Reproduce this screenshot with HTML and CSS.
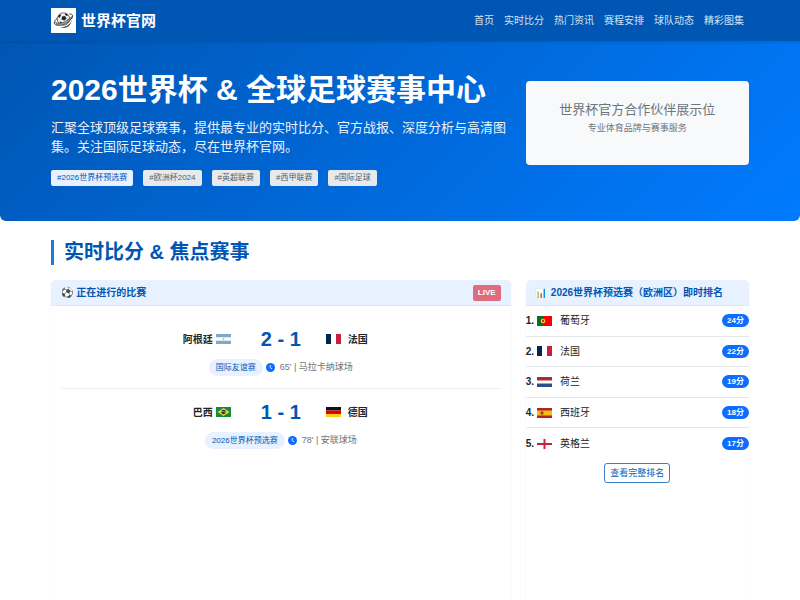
FILE: index.html
```html
<!DOCTYPE html>
<html lang="zh-CN">
<head>
<meta charset="utf-8">
<meta name="viewport" content="width=device-width, initial-scale=1">
<title>世界杯官网</title>
<link rel="stylesheet" href="styles.css">
</head>
<body>
<svg class="defs" aria-hidden="true">
  <symbol id="clock" viewBox="0 0 20 20"><circle cx="10" cy="10" r="10" fill="#0d6efd"/><path d="M9.5 4.5v6l4 2.5" fill="none" stroke="#fff" stroke-width="1.8"/></symbol>
  <symbol id="fr" viewBox="0 0 30 20"><path fill="#fff" d="M0 0h30v20H0z"/><path fill="#00264d" d="M0 0h10v20H0z"/><path fill="#c8203c" d="M20 0h10v20H20z"/></symbol>
</svg>
<header class="navbar">
  <div class="container navbar-inner">
    <a class="brand" href="#">
      <svg class="logo" viewBox="0 0 50 50" aria-hidden="true">
        <path fill="#fff" d="M0 0h50v50H0z"/>
        <circle cx="25" cy="22" r="12.5" fill="#eee" stroke="#444" stroke-width="1.5"/>
        <path d="M22 17l6-1 3 5-4 4-6-2zM14 17l4-5 2 3-3 5zM29 10l5 4-2 2-4-2zM32 24l4-3v6l-3 2zM18 27l4 2-1 4-4-3z" fill="#222"/>
        <path d="M12 21C5 26 5 33 11 34c10 2 26-6 31-14 3-6 0-8-5-8" fill="none" stroke="#333" stroke-width="2"/>
        <path d="M9 28c5 6 20 1 33-11-4 13-21 21-31 16z" fill="#999" stroke="#333"/>
        <path d="M17 37c11 4 22-4 25-14-2 13-13 21-25 14z" fill="#333"/>
      </svg>
      <span>世界杯官网</span>
    </a>
    <nav class="menu">
      <a href="#">首页</a><a href="#">实时比分</a><a href="#">热门资讯</a><a href="#">赛程安排</a><a href="#">球队动态</a><a href="#">精彩图集</a>
    </nav>
  </div>
</header>
<section class="hero">
  <div class="container columns">
    <div>
      <h1>2026世界杯 &amp; 全球足球赛事中心</h1>
      <p class="lead">汇聚全球顶级足球赛事，提供最专业的实时比分、官方战报、深度分析与高清图集。关注国际足球动态，尽在世界杯官网。</p>
      <div class="tags">
        <a class="tag tag-primary" href="#">#2026世界杯预选赛</a><a class="tag" href="#">#欧洲杯2024</a><a class="tag" href="#">#英超联赛</a><a class="tag" href="#">#西甲联赛</a><a class="tag" href="#">#国际足球</a>
      </div>
    </div>
    <aside class="partner">
      <p class="partner-title">世界杯官方合作伙伴展示位</p>
      <p class="partner-note">专业体育品牌与赛事服务</p>
    </aside>
  </div>
</section>
<main class="container main">
  <h2>实时比分 &amp; 焦点赛事</h2>
  <div class="columns grow">
    <section class="card">
      <div class="card-head"><h3><span class="emoji">⚽</span> 正在进行的比赛</h3><span class="live">LIVE</span></div>
      <div class="matches">
        <article class="match">
          <div class="teams">
            <div class="team home"><span>阿根廷</span>
              <svg class="flag" viewBox="0 0 30 20" aria-hidden="true"><path fill="#fff" d="M0 0h30v20H0z"/><path fill="#7ba9cc" d="M0 0h30v6.5H0zM0 13.500h30V20H0z"/><circle cx="15" cy="10" r="1.800" fill="#d8b45a"/></svg>
            </div>
            <strong class="score">2 - 1</strong>
            <div class="team"><svg class="flag" aria-hidden="true"><use href="#fr"/></svg><span>法国</span></div>
          </div>
          <div class="meta"><span class="pill">国际友谊赛</span><svg class="clock" aria-hidden="true"><use href="#clock"/></svg><span>65' | 马拉卡纳球场</span></div>
        </article>
        <article class="match">
          <div class="teams">
            <div class="team home"><span>巴西</span>
              <svg class="flag" viewBox="0 0 30 20" aria-hidden="true"><path fill="#168a3c" d="M0 0h30v20H0z"/><path fill="#f0d327" d="M15 2l12 8-12 8L3 10z"/><circle cx="15" cy="10" r="4.500" fill="#23335f"/><path d="M11 8.500q5 0 8 3" fill="none" stroke="#fff"/></svg>
            </div>
            <strong class="score">1 - 1</strong>
            <div class="team"><svg class="flag" viewBox="0 0 30 20" aria-hidden="true"><path fill="#111" d="M0 0h30v7H0z"/><path fill="#d00" d="M0 7h30v7H0z"/><path fill="#ffcc1a" d="M0 14h30v6H0z"/></svg><span>德国</span></div>
          </div>
          <div class="meta"><span class="pill">2026世界杯预选赛</span><svg class="clock" aria-hidden="true"><use href="#clock"/></svg><span>78' | 安联球场</span></div>
        </article>
      </div>
    </section>
    <section class="card">
      <div class="card-head"><h3><span class="emoji">📊</span> 2026世界杯预选赛（欧洲区）即时排名</h3></div>
      <ul class="ranking">
        <li><b>1.</b><svg class="flag" viewBox="0 0 30 20" aria-hidden="true"><path fill="#f00" d="M0 0h30v20H0z"/><path fill="#126b1c" d="M0 0h12v20H0z"/><circle cx="12" cy="10" r="4.500" fill="#f4dd36"/><path fill="#e22" d="M10 7.500h4v3l-2 2-2-2z"/></svg><span>葡萄牙</span><span class="points">24分</span></li>
        <li><b>2.</b><svg class="flag" aria-hidden="true"><use href="#fr"/></svg><span>法国</span><span class="points">22分</span></li>
        <li><b>3.</b><svg class="flag" viewBox="0 0 30 20" aria-hidden="true"><path fill="#fff" d="M0 0h30v20H0z"/><path fill="#a92b36" d="M0 0h30v7H0z"/><path fill="#2b4f8e" d="M0 13h30v7H0z"/></svg><span>荷兰</span><span class="points">19分</span></li>
        <li><b>4.</b><svg class="flag" viewBox="0 0 30 20" aria-hidden="true"><path fill="#b5202b" d="M0 0h30v20H0z"/><path fill="#f8bd12" d="M0 5h30v10H0z"/><path fill="#a8452b" d="M7 7h6v5l-3 2-3-2z"/></svg><span>西班牙</span><span class="points">18分</span></li>
        <li><b>5.</b><svg class="flag" viewBox="0 0 30 20" aria-hidden="true"><path fill="#fff" d="M0 0h30v20H0z"/><path fill="#cc1f3d" d="M13 0h4v20h-4zM0 8h30v4H0z"/></svg><span>英格兰</span><span class="points">17分</span></li>
      </ul>
      <button class="more" type="button">查看完整排名</button>
    </section>
  </div>
</main>
</body>
</html>
```

FILE: styles.css
```css
* { box-sizing: border-box; }
body {
  margin: 0;
  min-height: 100vh;
  display: flex;
  flex-direction: column;
  background: #fff;
  color: #212529;
  font: 10px/15px "Liberation Sans", "Noto Sans CJK SC", sans-serif;
}
h1, h2, h3, p, ul { margin: 0; padding: 0; }
a { color: inherit; text-decoration: none; }
.defs { display: none; }
.container { width: 100%; padding: 0 51px; }
.columns {
  display: grid;
  grid-template-columns: minmax(0, 1fr) 32%;
  column-gap: 15px;
}

.navbar {
  position: relative;
  background: #0056b3;
  color: #fff;
  box-shadow: 0 1px 3px rgba(0, 0, 0, .15);
}
.navbar-inner {
  display: flex;
  align-items: center;
  justify-content: space-between;
  min-height: 41px;
}
.brand { display: flex; align-items: center; gap: 5px; font-size: 15px; font-weight: bold; }
.logo { width: 25px; height: 25px; }
.menu { display: flex; gap: 10px; padding-right: 5px; color: #d3e2f2; }

.hero {
  padding: 30px 0 35px;
  border-radius: 0 0 6px 6px;
  background: linear-gradient(135deg, #0056b3, #007bff);
  color: #fff;
}
h1 { margin-bottom: 9px; font-size: 30px; line-height: 38px; white-space: nowrap; }
.lead { font-size: 13px; line-height: 19px; color: #e9f2fc; }
.tags { display: flex; flex-wrap: wrap; gap: 10px; margin-top: 14px; }
.tag {
  padding: 0 6px;
  border-radius: 2px;
  background: #e6eaef;
  color: #565e66;
  font-size: 8px;
  line-height: 16px;
}
.tag-primary { background: #e7f1ff; color: #0056b3; }
.partner {
  align-self: start;
  min-height: 84px;
  margin-top: 10px;
  padding: 20px 10px;
  border-radius: 4px;
  background: #f8f9fa;
  color: #6c757d;
  text-align: center;
}
.partner-title { font-size: 13px; line-height: 18px; }
.partner-note { margin-top: 3px; font-size: 9px; line-height: 12px; }

.main { flex: 1; display: flex; flex-direction: column; padding-top: 19px; }
h2 {
  margin-bottom: 15px;
  padding-left: 10px;
  border-left: 3px solid #1a7bd8;
  color: #0056b3;
  font-size: 20px;
  line-height: 25px;
}
.grow { flex: 1; }
.card { border-radius: 5px 5px 0 0; box-shadow: 0 1px 3px rgba(0, 0, 0, .05); }
.card-head {
  display: flex;
  align-items: center;
  justify-content: space-between;
  min-height: 26px;
  padding: 0 10px;
  border-bottom: 1px solid #dde8f5;
  border-radius: 5px 5px 0 0;
  background: #e7f1ff;
  color: #0056b3;
}
h3 { font-size: 10px; line-height: 15px; white-space: nowrap; }
.emoji { font-family: "Noto Color Emoji", sans-serif; font-weight: normal; }
.live {
  padding: 0 5px;
  border-radius: 2px;
  background: #de6c7c;
  color: #fff;
  font-size: 8px;
  font-weight: bold;
  line-height: 16px;
}
.matches { padding: 10px; }
.match { padding: 8px 0 12px; }
.match + .match { border-top: 1px solid #eceef0; }
.teams { display: grid; grid-template-columns: 1fr 90px 1fr; align-items: center; }
.team { display: flex; align-items: center; gap: 7px; font-weight: bold; }
.home { justify-content: flex-end; gap: 3px; padding-right: 5px; }
.flag { width: 15px; height: 10px; }
.score { color: #0056b3; font-size: 20px; line-height: 30px; text-align: center; }
.meta {
  display: flex;
  align-items: center;
  justify-content: center;
  margin-top: 5px;
  color: #6c757d;
  font-size: 9px;
}
.pill {
  padding: 0 7px;
  border-radius: 9px;
  background: #e7f1ff;
  color: #0056b3;
  font-size: 8px;
  line-height: 17px;
}
.clock { width: 9px; height: 9px; margin: 0 5px 0 3px; }

.ranking {
  display: grid;
  grid-auto-rows: 1fr;
  min-height: 153px;
  list-style: none;
}
.ranking li { display: flex; align-items: center; border-bottom: 1px solid #e4e7ea; }
.ranking li:last-child { border-bottom: 0; }
.ranking .flag { margin: 0 8px 0 3px; }
.points {
  margin-left: auto;
  padding: 0 5px;
  border-radius: 7px;
  background: #0d6efd;
  color: #fff;
  font-size: 8px;
  font-weight: bold;
  line-height: 13px;
}
.more {
  display: block;
  margin: 4px auto 0;
  padding: 2px 5px;
  border: 1px solid #3a7fc8;
  border-radius: 3px;
  background: #fff;
  color: #0b62bd;
  font: 9px/14px "Liberation Sans", "Noto Sans CJK SC", sans-serif;
}
```
